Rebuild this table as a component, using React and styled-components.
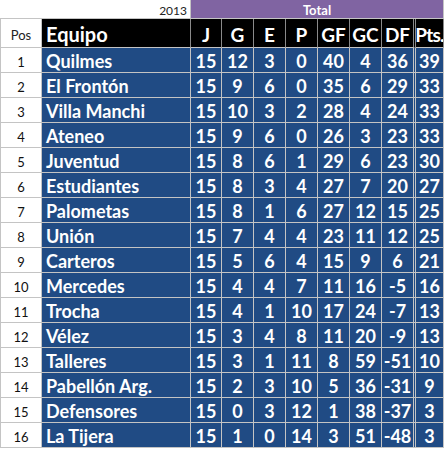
import React from 'react'
import styled, { createGlobalStyle } from 'styled-components'

const GlobalStyle = createGlobalStyle`
  html, body { margin: 0; padding: 0; background: #fff; }
  * { box-sizing: border-box; }
`

const COLS = '42px 149px 31px 32px 32px 32px 32px 32px 34px 28px'
const GRID = '#c4c4c4'
const BLUE = '#204b84'

const rows = [
    [1, 'Quilmes', 15, 12, 3, 0, 40, 4, 36, 39],
    [2, 'El Frontón', 15, 9, 6, 0, 35, 6, 29, 33],
    [3, 'Villa Manchi', 15, 10, 3, 2, 28, 4, 24, 33],
    [4, 'Ateneo', 15, 9, 6, 0, 26, 3, 23, 33],
    [5, 'Juventud', 15, 8, 6, 1, 29, 6, 23, 30],
    [6, 'Estudiantes', 15, 8, 3, 4, 27, 7, 20, 27],
    [7, 'Palometas', 15, 8, 1, 6, 27, 12, 15, 25],
    [8, 'Unión', 15, 7, 4, 4, 23, 11, 12, 25],
    [9, 'Carteros', 15, 5, 6, 4, 15, 9, 6, 21],
    [10, 'Mercedes', 15, 4, 4, 7, 11, 16, -5, 16],
    [11, 'Trocha', 15, 4, 1, 10, 17, 24, -7, 13],
    [12, 'Vélez', 15, 3, 4, 8, 11, 20, -9, 13],
    [13, 'Talleres', 15, 3, 1, 11, 8, 59, -51, 10],
    [14, 'Pabellón Arg.', 15, 2, 3, 10, 5, 36, -31, 9],
    [15, 'Defensores', 15, 0, 3, 12, 1, 38, -37, 3],
    [16, 'La Tijera', 15, 1, 0, 14, 3, 51, -48, 3],
]

const heads = ['J', 'G', 'E', 'P', 'GF', 'GC', 'DF', 'Pts.']

const App = () => {
    return (
        <>
            <GlobalStyle />
            <Table>
                <Row $h={19}>
                    <YearCell>2013</YearCell>
                    <TotalCell>Total</TotalCell>
                </Row>
                <Row $h={29}>
                    <PosHead>Pos</PosHead>
                    <TeamHead>Equipo</TeamHead>
                    {heads.map((h, i) => (
                        <HeadCell key={h} $double={i === 6} $tight={h === 'Pts.'}>{h}</HeadCell>
                    ))}
                </Row>
                {rows.map(([pos, team, ...nums]) => (
                    <Row $h={25} key={pos}>
                        <PosCell>{pos}</PosCell>
                        <TeamCell>{team}</TeamCell>
                        {nums.map((n, i) => (
                            <NumCell key={i} $double={i === 6}>{n}</NumCell>
                        ))}
                    </Row>
                ))}
            </Table>
        </>
    )
}

const Table = styled.div`
  display: grid;
  width: 444px;
  font-family: Lato, "Open Sans", sans-serif;
`

const Row = styled.div`
  display: grid;
  grid-template-columns: ${COLS};
  height: ${p => p.$h}px;
`

const Cell = styled.div`
  display: flex;
  align-items: center;
  border-right: 1px solid ${GRID};
  border-bottom: 1px solid ${GRID};
  white-space: nowrap;
  overflow: hidden;
`

const YearCell = styled(Cell)`
  grid-column: 1 / span 2;
  justify-content: flex-end;
  padding: 2px 3px 0 0;
  font-size: 12px;
  color: #222;
`

const TotalCell = styled(Cell)`
  grid-column: 3 / span 8;
  justify-content: center;
  background: #8064a2;
  color: #fff;
  font-weight: 700;
  font-size: 13px;
  padding-top: 1px;
`

const PosHead = styled(Cell)`
  border-left: 1px solid ${GRID};
  justify-content: center;
  font-size: 13px;
  color: #222;
  padding-top: 4px;
`

const TeamHead = styled(Cell)`
  background: #000;
  color: #fff;
  font-weight: 700;
  font-size: 20px;
  padding: 2px 0 0 4px;
  border-right-color: #8a8a8a;
`

const HeadCell = styled(Cell)`
  background: #000;
  color: #fff;
  font-weight: 700;
  font-size: 19px;
  justify-content: center;
  padding-top: 2px;
  border-right: ${p => (p.$double ? '3px double #8a8a8a' : '1px solid #8a8a8a')};
  letter-spacing: ${p => (p.$tight ? '-0.8px' : '0')};
`

const PosCell = styled(Cell)`
  border-left: 1px solid ${GRID};
  justify-content: center;
  font-size: 13px;
  color: #111;
  padding-top: 3px;
`

const TeamCell = styled(Cell)`
  background: ${BLUE};
  color: #fff;
  font-weight: 700;
  font-size: 18px;
  padding: 2px 0 0 4px;
`

const NumCell = styled(Cell)`
  background: ${BLUE};
  color: #fff;
  font-weight: 700;
  font-size: 18px;
  justify-content: center;
  padding-top: 2px;
  border-right: ${p => (p.$double ? `3px double ${GRID}` : `1px solid ${GRID}`)};
`

export default App
